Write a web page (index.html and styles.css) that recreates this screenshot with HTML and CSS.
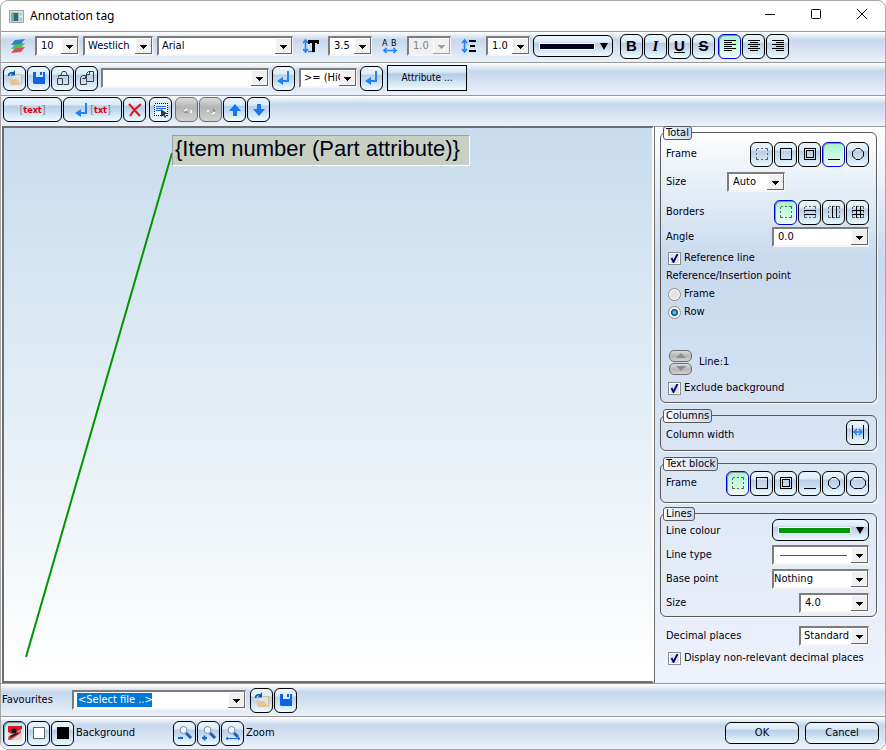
FILE: index.html
```
<!DOCTYPE html>
<html lang="en">
<head>
    <meta charset="UTF-8">
    <meta name="viewport" content="width=device-width, initial-scale=1.0">
    <title>Annotation tag</title>
    <link rel="stylesheet" href="styles.css">
</head>
<body>
    <!-- Shared icons -->
    <svg class="sprite" aria-hidden="true">
        <symbol id="i-open" viewBox="0 0 16 16">
            <path d="M5 5h4l1-1h4v11H5z" fill="#d8e4ee"/>
            <path d="M9 4.500h5.500v10" fill="none" stroke="#dcbc84"/>
            <path d="M2 9h8l4 6H4z" fill="#e6c590"/>
            <path d="M1.500 6c0-3 3-4 5-3" fill="none" stroke="#0a5a96" stroke-width="1.600"/>
            <path d="M8 0v5.500H3.500z" fill="#0a5a96"/>
        </symbol>
        <symbol id="i-save" viewBox="0 0 16 16">
            <path d="M2 2h12v12H3l-1-1z" fill="#0a64e6"/>
            <path d="M5 2h7v5H5z" fill="#dce8f8"/>
            <path d="M9 2h2v3H9z" fill="#0a64e6"/>
        </symbol>
        <symbol id="i-enter" viewBox="0 0 16 16">
            <path d="M12 1v10H6" fill="none" stroke="#1e82fa" stroke-width="2"/>
            <path d="M7 7v8L1 11z" fill="#1e82fa"/>
        </symbol>
        <symbol id="i-dash" viewBox="0 0 16 16">
            <path class="crisp" d="M2.500 2.500h11v11h-11z" fill="none" stroke="#646464" stroke-dasharray="2.500 2 2 2 2.500 0"/>
        </symbol>
        <symbol id="i-box" viewBox="0 0 16 16">
            <rect x="2.500" y="2.500" width="11" height="11" fill="none" stroke="#000"/>
        </symbol>
        <symbol id="i-double" viewBox="0 0 16 16">
            <rect x="2.500" y="2.500" width="11" height="11" fill="none" stroke="#000"/>
            <rect x="4.500" y="4.500" width="7" height="7" fill="none" stroke="#000"/>
        </symbol>
        <symbol id="i-under" viewBox="0 0 16 16">
            <path d="M2 13.500h12" stroke="#000"/>
        </symbol>
        <symbol id="i-circle" viewBox="0 0 16 16">
            <path d="M6 2.500h4l3.500 3.500v4L10 13.500H6L2.500 10V6z" fill="none" stroke="#000"/>
        </symbol>
        <symbol id="i-slot" viewBox="0 0 16 16">
            <path d="M4 2.500h8l3.500 3.500v4L12 13.500H4L.5 10V6z" fill="none" stroke="#000"/>
        </symbol>
    </svg>

    <div class="window">
        <!-- Title bar -->
        <header class="titlebar">
            <svg class="app-icon" viewBox="0 0 16 14" aria-hidden="true">
                <rect x=".5" y=".5" width="15" height="13" fill="#dce6e6" stroke="#96a0a0"/>
                <rect x="2" y="3" width="8" height="9" fill="#2d6e78"/>
                <path d="M2 3h3v9H2z" fill="#7ab4aa"/>
                <path d="M11 3h3v3h-3zM11 8h3v4h-3z" fill="#b4c8c8"/>
            </svg>
            <h1>Annotation tag</h1>
            <button class="win-btn" aria-label="Minimize"><svg viewBox="0 0 10 10"><path d="M0 5.500h10"/></svg></button>
            <button class="win-btn" aria-label="Maximize"><svg viewBox="0 0 10 10"><rect x=".5" y=".5" width="9" height="9" rx="1"/></svg></button>
            <button class="win-btn" aria-label="Close"><svg viewBox="0 0 10 10"><path d="M0 0l10 10M10 0L0 10"/></svg></button>
        </header>

        <!-- Font toolbar -->
        <div class="toolbar format-bar">
            <svg class="icon layers" viewBox="0 0 16 16" aria-hidden="true">
                <path d="M5 10l10-1-4 5-10 1z" fill="#e64664"/>
                <path d="M5 6l10-1-4 5-10 1z" fill="#50be50"/>
                <path d="M5 2l10-1-4 5-10 1z" fill="#2882d2"/>
            </svg>
            <select class="combo w44" aria-label="Layer"><option>10</option></select>
            <select class="combo w70 tight" aria-label="Script"><option>Westlich</option></select>
            <select class="combo w136 tight" aria-label="Font"><option>Arial</option></select>
            <svg class="icon" viewBox="0 0 16 16" aria-hidden="true">
                <path d="M2.500 3v10M0 5l2.500-3L5 5M0 11l2.500 3L5 11M5 13.500h6" stroke="#1e82fa" stroke-width="1.600" fill="none"/>
                <path d="M5 2h11v4h-2V5h-2v9H9V5H7v1H5z" fill="#000"/>
            </svg>
            <select class="combo w44" aria-label="Text height"><option>3.5</option></select>
            <svg class="icon" viewBox="0 0 16 16" aria-hidden="true">
                <text x="0" y="8" class="ab">A</text>
                <text x="9" y="8" class="ab">B</text>
                <path d="M2 12.500h12M4.500 10L2 12.500 4.500 15M11.500 10l2.500 2.500-2.500 2.500" stroke="#1e82fa" stroke-width="1.600" fill="none"/>
            </svg>
            <select class="combo w44" aria-label="Character spacing" disabled><option>1.0</option></select>
            <svg class="icon" viewBox="0 0 16 16" aria-hidden="true">
                <path d="M3.500 3v10M1 5l2.500-3L6 5M1 11l2.500 3L6 11" stroke="#1e82fa" stroke-width="1.600" fill="none"/>
                <path d="M8 3h7M9 8h5M8 13h7" stroke="#000" stroke-width="2"/>
            </svg>
            <select class="combo w44" aria-label="Line spacing"><option>1.0</option></select>
            <button class="btn line-btn" aria-label="Text colour"><span class="swatch navy"></span><span class="tri"></span></button>
            <div class="btn-group">
                <button class="btn glyph" aria-label="Bold"><b>B</b></button>
                <button class="btn glyph serif" aria-label="Italic"><i>I</i></button>
                <button class="btn glyph" aria-label="Underline"><u>U</u></button>
                <button class="btn glyph" aria-label="Strikethrough"><s>S</s></button>
            </div>
            <div class="btn-group">
                <button class="btn on" aria-label="Align left"><svg class="icon" viewBox="0 0 16 16"><path class="ink" d="M2 2.500h12M2 4.500h8M2 6.500h12M2 8.500h8M2 10.500h12M2 12.500h8"/></svg></button>
                <button class="btn" aria-label="Align center"><svg class="icon" viewBox="0 0 16 16"><path class="ink" d="M2 2.500h12M4 4.500h8M2 6.500h12M4 8.500h8M2 10.500h12M4 12.500h8"/></svg></button>
                <button class="btn" aria-label="Align right"><svg class="icon" viewBox="0 0 16 16"><path class="ink" d="M2 2.500h12M6 4.500h8M2 6.500h12M6 8.500h8M2 10.500h12M6 12.500h8"/></svg></button>
            </div>
        </div>

        <!-- Attribute toolbar -->
        <div class="toolbar attribute-bar">
            <div class="btn-group">
                <button class="btn" aria-label="Open"><svg class="icon"><use href="#i-open"/></svg></button>
                <button class="btn" aria-label="Save"><svg class="icon"><use href="#i-save"/></svg></button>
                <button class="btn" aria-label="Paste"><svg class="icon" viewBox="0 0 16 16"><path class="sketch" d="M3.500 7.500v-2h10v9h-5M5.500 5.500l2-4h3l2 4M2.500 8.500h5v6h-5z"/></svg></button>
                <button class="btn" aria-label="Copy"><svg class="icon" viewBox="0 0 16 16"><path class="sketch" d="M7.500 12.500v2h-6v-7l2-2h3v3h-3M7.500 3.500l2-2h5v10h-7zM7.500 4.500h3v-3"/></svg></button>
            </div>
            <select class="combo w168" aria-label="Text"><option></option></select>
            <button class="btn" aria-label="Insert text"><svg class="icon"><use href="#i-enter"/></svg></button>
            <select class="combo w58 tight" aria-label="Special character"><option>&gt;= (HiCAD)</option></select>
            <button class="btn" aria-label="Insert character"><svg class="icon"><use href="#i-enter"/></svg></button>
            <button class="attribute">Attribute ...</button>
        </div>

        <!-- Text block toolbar -->
        <div class="toolbar block-bar">
            <div class="btn-group">
                <button class="btn wide"><span class="tag">text</span></button>
                <button class="btn wide" aria-label="New line txt"><svg class="icon"><use href="#i-enter"/></svg><span class="tag">txt</span></button>
                <button class="btn" aria-label="Delete"><svg class="icon" viewBox="0 0 16 16"><path d="M2 2l11 12M14 2C9 6 6 9 3 14" stroke="#e61414" stroke-width="2" fill="none"/></svg></button>
            </div>
            <button class="btn" aria-label="Select"><svg class="icon" viewBox="0 0 16 16"><rect class="crisp" x="1.500" y="1.500" width="13" height="12" fill="#f0f8ff" stroke="#000" stroke-dasharray="1 1"/><path d="M3 4.500h10M3 6.500h10M3 8.500h6" stroke="#1e64dc"/><path d="M8 7v8l2-2 2 3 1-1-1-3h3z" fill="#323c46"/></svg></button>
            <div class="btn-group">
                <button class="btn" aria-label="Undo" disabled><svg class="icon" viewBox="0 0 16 16"><path d="M4 9l3-3v3l2 2H6z" fill="#888"/><path d="M5 9l3-2M12 8v3" stroke="#f4f4f4" stroke-width="2"/></svg></button>
                <button class="btn" aria-label="Redo" disabled><svg class="icon" viewBox="0 0 16 16"><path d="M13 9l-3-3v3l-2 2h3z" fill="#888"/><path d="M12 10l-3 2M5 8v2" stroke="#f4f4f4" stroke-width="2"/></svg></button>
                <button class="btn" aria-label="Up"><svg class="icon" viewBox="0 0 16 16"><path d="M8 2l6 7h-4v5H6V9H2z" fill="#1478f0"/></svg></button>
                <button class="btn" aria-label="Down"><svg class="icon" viewBox="0 0 16 16"><path d="M8 14l6-7h-4V2H6v5H2z" fill="#1478f0"/></svg></button>
            </div>
        </div>

        <main class="work">
            <!-- Drawing preview -->
            <div class="preview">
                <svg class="leader" aria-hidden="true"><path d="M168 25L22 529" stroke="#009600" stroke-width="2"/></svg>
                <div class="annotation">{Item number (Part attribute)}</div>
            </div>

            <!-- Properties -->
            <aside class="side">
                <fieldset class="group total">
                    <legend>Total</legend>
                    <div class="row tall">
                        <span>Frame</span>
                        <div class="btn-group">
                            <button class="btn" aria-label="No frame"><svg class="icon"><use href="#i-dash"/></svg></button>
                            <button class="btn" aria-label="Rectangle"><svg class="icon"><use href="#i-box"/></svg></button>
                            <button class="btn" aria-label="Double rectangle"><svg class="icon"><use href="#i-double"/></svg></button>
                            <button class="btn on" aria-label="Underline"><svg class="icon"><use href="#i-under"/></svg></button>
                            <button class="btn" aria-label="Circle"><svg class="icon"><use href="#i-circle"/></svg></button>
                        </div>
                    </div>
                    <div class="row size-row">
                        <label for="frameSize">Size</label>
                        <select id="frameSize" class="combo w58"><option>Auto</option></select>
                    </div>
                    <div class="row tall">
                        <span>Borders</span>
                        <div class="btn-group">
                            <button class="btn on" aria-label="No borders"><svg class="icon"><use href="#i-dash"/></svg></button>
                            <button class="btn" aria-label="Horizontal borders"><svg class="icon"><use href="#i-dash"/><path class="ink" d="M2 6.500h12M2 10.500h12"/></svg></button>
                            <button class="btn" aria-label="Vertical borders"><svg class="icon"><use href="#i-dash"/><path class="ink" d="M6.500 2v12M10.500 2v12"/></svg></button>
                            <button class="btn" aria-label="All borders"><svg class="icon"><use href="#i-dash"/><path class="ink" d="M2 6.500h12M2 10.500h12M6.500 2v12M10.500 2v12"/></svg></button>
                        </div>
                    </div>
                    <div class="row">
                        <label for="angle">Angle</label>
                        <select id="angle" class="combo w97"><option>0.0</option></select>
                    </div>
                    <label class="check"><input type="checkbox" checked>Reference line</label>
                    <div class="caption">Reference/Insertion point</div>
                    <label class="check"><input type="radio" name="point">Frame</label>
                    <label class="check"><input type="radio" name="point" checked>Row</label>
                    <div class="line-row">
                        <div class="spin">
                            <button aria-label="Line up" disabled><svg viewBox="0 0 10 5"><path d="M5 0l5 5H0z"/></svg></button>
                            <button aria-label="Line down" disabled><svg viewBox="0 0 10 5"><path d="M0 0h10L5 5z"/></svg></button>
                        </div>
                        <span>Line:1</span>
                    </div>
                    <label class="check"><input type="checkbox" checked>Exclude background</label>
                </fieldset>

                <fieldset class="group columns">
                    <legend>Columns</legend>
                    <div class="row tall">
                        <span>Column width</span>
                        <button class="btn" aria-label="Column width"><svg class="icon" viewBox="0 0 16 16"><path class="ink" d="M2.500 1v14M13.500 1v14"/><path d="M4 8h8M7 5L4 8l3 3M9 5l3 3-3 3" fill="none" stroke="#1e82fa" stroke-width="1.500"/></svg></button>
                    </div>
                </fieldset>

                <fieldset class="group block">
                    <legend>Text block</legend>
                    <div class="row tall">
                        <span>Frame</span>
                        <div class="btn-group">
                            <button class="btn on" aria-label="No frame"><svg class="icon"><use href="#i-dash"/></svg></button>
                            <button class="btn" aria-label="Rectangle"><svg class="icon"><use href="#i-box"/></svg></button>
                            <button class="btn" aria-label="Double rectangle"><svg class="icon"><use href="#i-double"/></svg></button>
                            <button class="btn" aria-label="Underline"><svg class="icon"><use href="#i-under"/></svg></button>
                            <button class="btn" aria-label="Circle"><svg class="icon"><use href="#i-circle"/></svg></button>
                            <button class="btn" aria-label="Slot"><svg class="icon"><use href="#i-slot"/></svg></button>
                        </div>
                    </div>
                </fieldset>

                <fieldset class="group lines">
                    <legend>Lines</legend>
                    <div class="row">
                        <span>Line colour</span>
                        <button class="btn line-btn w97" aria-label="Line colour"><span class="swatch green"></span><span class="tri"></span></button>
                    </div>
                    <div class="row">
                        <label for="lineType">Line type</label>
                        <select id="lineType" class="combo w97 line-type"><option></option></select>
                    </div>
                    <div class="row">
                        <label for="basePoint">Base point</label>
                        <select id="basePoint" class="combo w97 flush"><option>Nothing</option></select>
                    </div>
                    <div class="row">
                        <label for="lineSize">Size</label>
                        <select id="lineSize" class="combo w70"><option>4.0</option></select>
                    </div>
                </fieldset>

                <div class="decimals">
                    <div class="row">
                        <label for="decimals">Decimal places</label>
                        <select id="decimals" class="combo w70 tight"><option>Standard</option></select>
                    </div>
                    <label class="check"><input type="checkbox" checked>Display non-relevant decimal places</label>
                </div>
            </aside>
        </main>

        <!-- Favourites -->
        <div class="toolbar favourites">
            <label for="favourite">Favourites</label>
            <select id="favourite" class="combo w174 marked"><option>&lt;Select file ..&gt;</option></select>
            <div class="btn-group">
                <button class="btn" aria-label="Open favourite"><svg class="icon"><use href="#i-open"/></svg></button>
                <button class="btn" aria-label="Save favourite"><svg class="icon"><use href="#i-save"/></svg></button>
            </div>
        </div>

        <!-- Footer -->
        <footer class="toolbar footer">
            <div class="btn-group">
                <button class="btn on" aria-label="Gradient background"><svg class="icon" viewBox="0 0 16 16"><path d="M1 1h14v14H1z" fill="#f0d2d7"/><path d="M1 1h14v3L5 9 1 7z" fill="#dc1432"/><path d="M1 12l13-7v3L4 15H1z" fill="#e65064"/><path d="M3 12l8-4" stroke="#282828" stroke-width="2"/><circle cx="7" cy="6" r="2.500" fill="#141414"/></svg></button>
                <button class="btn" aria-label="White background"><svg class="icon" viewBox="0 0 16 16"><rect x="2.500" y="2.500" width="11" height="11" fill="#fff" stroke="#646464"/></svg></button>
                <button class="btn" aria-label="Black background"><svg class="icon" viewBox="0 0 16 16"><path d="M2 2h12v12H2z"/></svg></button>
            </div>
            <span class="footer-label">Background</span>
            <div class="btn-group">
                <button class="btn" aria-label="Zoom out"><svg class="icon" viewBox="0 0 16 16"><path d="M9 8l5 5" stroke="#1e5ac8" stroke-width="3"/><circle cx="6.500" cy="5" r="3.500" fill="#f0f8ff" stroke="#828c96"/><path d="M1 13h5" stroke="#1464dc" stroke-width="2"/></svg></button>
                <button class="btn" aria-label="Zoom in"><svg class="icon" viewBox="0 0 16 16"><path d="M9 8l5 5" stroke="#1e5ac8" stroke-width="3"/><circle cx="6.500" cy="5" r="3.500" fill="#f0f8ff" stroke="#828c96"/><path d="M1 13h5M3.500 10.500v5" stroke="#1464dc" stroke-width="2"/></svg></button>
                <button class="btn" aria-label="Zoom all"><svg class="icon" viewBox="0 0 16 16"><path d="M9 8l4 4" stroke="#1e5ac8" stroke-width="3"/><circle cx="6.500" cy="5" r="3.500" fill="#f0f8ff" stroke="#828c96"/><path d="M1 13.500h14M3 12l-2 1.500L3 15M13 12l2 1.500-2 1.500" fill="none" stroke="#1464dc"/></svg></button>
            </div>
            <span>Zoom</span>
            <div class="actions">
                <button class="btn action">OK</button>
                <button class="btn action">Cancel</button>
            </div>
        </footer>
    </div>
</body>
</html>
```
FILE: styles.css
```
* {
    margin: 0;
    padding: 0;
    box-sizing: border-box;
}

body {
    background: #fff;
    color: #000014;
    font: 11px/14px "DejaVu Sans Condensed", Tahoma, sans-serif;
}

button, select, input {
    font: inherit;
    color: inherit;
}

.sprite {
    display: none;
}

.window {
    display: flex;
    flex-direction: column;
    min-height: 100vh;
    border: 1px solid #a8a8a8;
    border-radius: 8px;
    overflow: hidden;
}

/* Title bar */
.titlebar {
    display: flex;
    align-items: center;
    height: 30px;
    padding-left: 8px;
}

.titlebar h1 {
    flex: 1;
    margin-left: 6px;
    font: 12px/16px "Noto Sans", "Open Sans", sans-serif;
    color: #000;
}

.app-icon {
    width: 15px;
    height: 13px;
}

.win-btn {
    width: 46px;
    height: 30px;
    border: none;
    background: none;
}

.win-btn svg {
    width: 10px;
    height: 10px;
    overflow: visible;
    fill: none;
    stroke: #000;
}

/* Toolbars */
.toolbar {
    display: flex;
    flex: none;
    align-items: center;
    height: 33px;
    padding: 0 2px;
    border-top: 1px solid #989898;
    background: linear-gradient(#fff, #c8d8ec 25%, #c8d8ec 30%, #ebf1fa);
}

.btn-group {
    display: flex;
    gap: 1px;
}

.icon {
    flex: none;
    display: block;
    width: 16px;
    height: 16px;
}

.btn {
    display: flex;
    flex: none;
    align-items: center;
    justify-content: center;
    width: 23px;
    height: 25px;
    border: 1px solid #000;
    border-radius: 6px;
    background: linear-gradient(#e8f6fc, #dcebf8 30%, #b9cde6 36%, #c8dcf0 60%, #ebfcff);
}

.btn.on {
    border-color: #0000dc;
    background: linear-gradient(#a0f5c8, #d2fae6 60%, #f0faf5);
    box-shadow: inset 1px 1px #969696, inset -1px -1px #fff;
}

.btn:disabled {
    border-color: #6e6e6e;
    background: linear-gradient(#dcdcdc, #b4b4b4 40%, #d2d2d2);
}

.combo {
    flex: none;
    height: 20px;
    padding-left: 4px;
    padding-right: 16px;
    border: 2px solid;
    border-right-width: 1px;
    border-color: #7d7d7d #f5f5f5 #f5f5f5 #7d7d7d;
    border-radius: 0;
    appearance: none;
    background: #fff url("data:image/svg+xml,%3Csvg xmlns='http://www.w3.org/2000/svg' width='17' height='16' shape-rendering='crispEdges'%3E%3Crect width='17' height='16' fill='%23696969'/%3E%3Crect width='16' height='15' fill='%23fff'/%3E%3Crect x='1' y='1' width='15' height='14' fill='%23f0f0f0'/%3E%3Cpath d='M5 7h7v1h-1v1h-1v1h-1v1h-1v-1h-1v-1h-1v-1h-1z'/%3E%3C/svg%3E") right center no-repeat;
}

.combo:disabled {
    color: #828282;
    opacity: 1;
    background-color: #f0f0f0;
    background-image: url("data:image/svg+xml,%3Csvg xmlns='http://www.w3.org/2000/svg' width='17' height='16' shape-rendering='crispEdges'%3E%3Crect width='17' height='16' fill='%23a0a0a0'/%3E%3Crect width='16' height='15' fill='%23fff'/%3E%3Crect x='1' y='1' width='15' height='14' fill='%23f0f0f0'/%3E%3Cpath fill='%23a0a0a0' d='M5 7h7v1h-1v1h-1v1h-1v1h-1v-1h-1v-1h-1v-1h-1z'/%3E%3C/svg%3E");
}

.combo.tight {
    padding-left: 3px;
}

.combo.flush {
    padding-left: 0;
}

.w44 { width: 44px; }
.w58 { width: 58px; }
.w70 { width: 70px; }
.w97 { width: 97px; }
.w136 { width: 136px; }
.w168 { width: 168px; }
.w174 { width: 174px; }

.format-bar {
    gap: 4px;
    height: 31px;
    padding-left: 9px;
    padding-bottom: 2px;
}

.format-bar > .icon {
    margin: 0 5px 0 6px;
}

.format-bar > .layers {
    margin-left: 0;
}

.format-bar > .btn-group:last-child {
    margin-left: -1px;
}

.format-bar > .line-btn {
    margin: 0 3px 0 -1px;
}

.line-btn {
    gap: 5px;
    width: 80px;
    height: 22px;
}

.line-btn.w97 {
    width: 97px;
    margin-bottom: 2px;
}

.swatch {
    flex: none;
    width: 56px;
    height: 7px;
    border: 1px solid #fff;
}

.w97 .swatch {
    width: 73px;
}

.navy { background: #00001e; }
.green { background: #009600; }

.tri {
    border: 4px solid transparent;
    border-top: 7px solid #000;
    border-bottom: none;
}

.glyph {
    font: bold 15px/16px "Liberation Sans", sans-serif;
    color: #000;
}

.serif {
    font-family: "Liberation Serif", serif;
}

.ab {
    font: 9px "DejaVu Sans Condensed", sans-serif;
}

.crisp {
    shape-rendering: crispEdges;
}

.ink {
    fill: none;
    stroke: #000;
    shape-rendering: crispEdges;
}

.sketch {
    fill: none;
    stroke: #3c3c3c;
}

.attribute-bar {
    gap: 3px;
    padding-bottom: 2px;
}

.attribute-bar > .w58 {
    margin-left: 1px;
}

.attribute {
    width: 80px;
    height: 26px;
    margin-left: 1px;
    border: 1px solid #000;
    background: linear-gradient(#ebf6fc, #d7e8f5 25%, #b4cce6 35%, #ebfcff);
    font-size: 10px;
}

.block-bar {
    gap: 3px;
    height: 31px;
    padding-bottom: 3px;
}

.btn.wide {
    width: 59px;
}

.tag {
    color: #dc0000;
    font: bold 9px/12px "DejaVu Sans Condensed", sans-serif;
}

.tag::before,
.tag::after {
    color: #828282;
    font-weight: normal;
    font-size: 11px;
}

.tag::before { content: "["; }
.tag::after { content: "]"; }

/* Work area */
.work {
    display: flex;
    flex: 1;
}

.preview {
    position: relative;
    flex: 1;
    margin-left: 1px;
    border: 2px solid;
    border-color: #6e6e6e #fff #6e6e6e #6e6e6e;
    background: linear-gradient(#c8dcec, #fff);
}

.leader {
    position: absolute;
    left: 0;
    top: 0;
    width: 100%;
    height: 100%;
}

.annotation {
    position: absolute;
    left: 168px;
    top: 7px;
    padding: 0 9px 3px 2px;
    border: 1px solid;
    border-color: #a0a0a0 #fff #fff #a0a0a0;
    background: #c8d0c4;
    font: 22px/26px "Liberation Sans", Arial, sans-serif;
    white-space: nowrap;
}

.side {
    flex: none;
    width: 231px;
    padding: 5px 8px 15px 5px;
    border-top: 1px solid #989898;
    border-left: 1px solid #6e6e6e;
    background: linear-gradient(#fff, #c8daee 24%, #eef2fb);
}

/* Groups */
.group {
    position: relative;
    min-width: 0;
    margin-bottom: 12px;
    padding: 0 7px 0 5px;
    border: 1px solid #5a5a5a;
    border-radius: 6px;
    box-shadow: 1px 1px #fff;
}

.group legend {
    position: absolute;
    left: 2px;
    top: -7px;
    padding: 0 2px;
    border: 1px solid #5a5a5a;
    border-radius: 3px;
    background: linear-gradient(90deg, #fff, #c8d8ec);
    line-height: 12px;
}

.row {
    display: flex;
    align-items: center;
    justify-content: space-between;
    height: 24px;
}

.row.tall {
    height: 26px;
}

.total {
    padding-top: 8px;
    padding-bottom: 5px;
}

.size-row {
    height: 30px;
    margin-bottom: 2px;
}

.size-row select {
    margin-right: 84px;
}

.check {
    display: flex;
    align-items: center;
    gap: 3px;
    height: 18px;
    padding-left: 2px;
}

.caption {
    line-height: 18px;
}

.check input {
    flex: none;
    width: 13px;
    height: 13px;
    appearance: none;
    border: 1px solid #8c8c8c;
    background: #f0f4fa;
    box-shadow: inset 0 0 0 1px #fff;
}

.check input[type="checkbox"]:checked {
    background: #dce4f0 url("data:image/svg+xml,%3Csvg xmlns='http://www.w3.org/2000/svg' width='11' height='11'%3E%3Cpath d='M2.500 5l2 4 4-8' fill='none' stroke='%23000078' stroke-width='1.800'/%3E%3C/svg%3E");
}

.check input[type="radio"] {
    border-radius: 50%;
    background: #e4e4e4;
}

.check input[type="radio"]:checked {
    background: radial-gradient(circle, #50c8f0 0 1px, #0a4678 3px, #f0f0f0 4px);
}

.line-row {
    display: flex;
    align-items: center;
    gap: 7px;
    height: 26px;
    margin: 28px 0 4px;
    padding-left: 3px;
}

.spin {
    display: flex;
    flex-direction: column;
    gap: 1px;
}

.spin button {
    display: flex;
    align-items: center;
    justify-content: center;
    width: 23px;
    height: 12px;
    border: 1px solid #6e6e6e;
    border-radius: 5px;
    background: linear-gradient(#dcdcdc, #b4b4b4 50%, #d2d2d2);
}

.spin svg {
    width: 10px;
    height: 5px;
    fill: #8c8c8c;
}

.columns {
    padding-top: 3px;
    padding-bottom: 5px;
}

.columns span {
    padding-top: 6px;
}

.block {
    margin-bottom: 10px;
    padding-top: 6px;
    padding-bottom: 6px;
}

.lines {
    margin-bottom: 7px;
    padding-top: 5px;
    padding-bottom: 1px;
}

.line-type {
    background-image: linear-gradient(#505050, #505050), url("data:image/svg+xml,%3Csvg xmlns='http://www.w3.org/2000/svg' width='17' height='16' shape-rendering='crispEdges'%3E%3Crect width='17' height='16' fill='%23696969'/%3E%3Crect width='16' height='15' fill='%23fff'/%3E%3Crect x='1' y='1' width='15' height='14' fill='%23f0f0f0'/%3E%3Cpath d='M5 7h7v1h-1v1h-1v1h-1v1h-1v-1h-1v-1h-1v-1h-1z'/%3E%3C/svg%3E");
    background-position: 6px center, right center;
    background-size: 67px 1px, 17px 16px;
}

.decimals {
    padding: 0 8px 0 6px;
}

.decimals .check {
    height: 20px;
    white-space: nowrap;
}

/* Bottom bars */
.favourites {
    gap: 4px;
    padding-left: 1px;
}

.favourites label {
    width: 66px;
}

.marked {
    color: #fff;
    background-color: #fff;
    background-image: linear-gradient(#0078d7, #0078d7), url("data:image/svg+xml,%3Csvg xmlns='http://www.w3.org/2000/svg' width='17' height='16' shape-rendering='crispEdges'%3E%3Crect width='17' height='16' fill='%23696969'/%3E%3Crect width='16' height='15' fill='%23fff'/%3E%3Crect x='1' y='1' width='15' height='14' fill='%23f0f0f0'/%3E%3Cpath d='M5 7h7v1h-1v1h-1v1h-1v1h-1v-1h-1v-1h-1v-1h-1z'/%3E%3C/svg%3E");
    background-position: 3px center, right center;
    background-size: 75px 14px, 17px 16px;
}

.footer {
    gap: 2px;
}

.footer-label {
    width: 95px;
}

.actions {
    display: flex;
    gap: 6px;
    margin-left: auto;
    margin-right: 4px;
}

.action {
    width: 74px;
    height: 22px;
}
```
